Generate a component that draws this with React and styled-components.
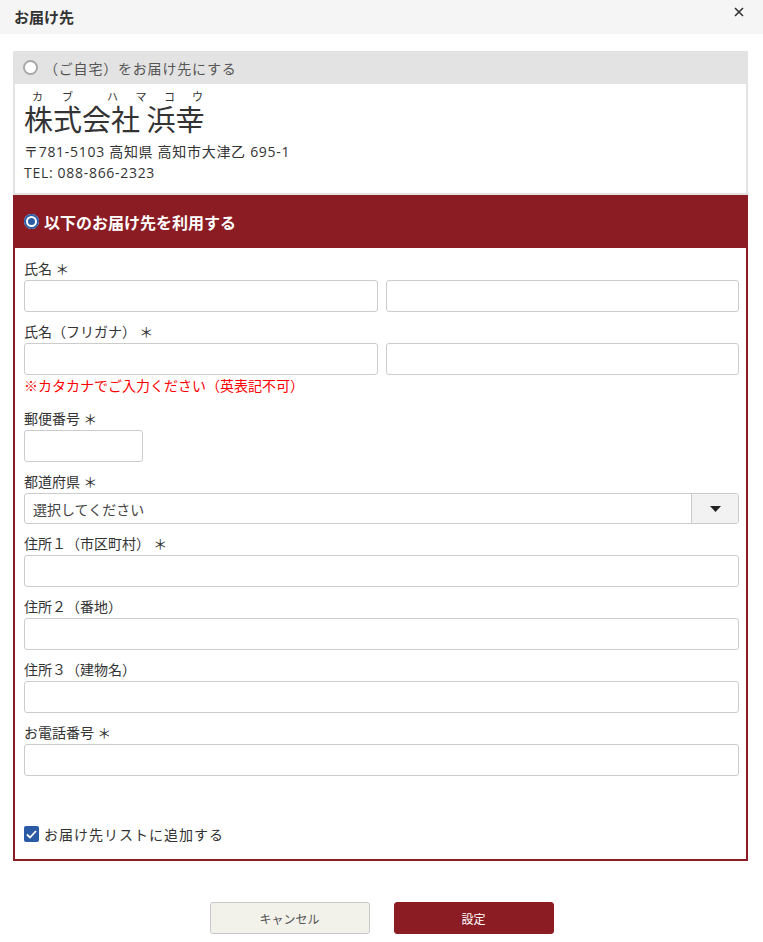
import styled, { createGlobalStyle } from 'styled-components'

const GlobalStyle = createGlobalStyle`
  * { box-sizing: border-box; }
  body {
    margin: 0;
    background: #FFF;
    font-family: "Noto Sans CJK JP", "Noto Sans", sans-serif;
    color: #333;
  }
`

function Radio({ checked }) {
  return <RadioMark $checked={checked} />
}

function App() {
  return (
    <Modal>
      <GlobalStyle />
      <Header>
        <h2>お届け先</h2>
        <CloseButton aria-label="閉じる">
          <svg width="10" height="10" viewBox="0 0 10 10">
            <path d="M1 1 L9 9 M9 1 L1 9" stroke="#333" strokeWidth="1.6" />
          </svg>
        </CloseButton>
      </Header>

      <Body>
        <HomeBox>
          <HomeHead>
            <Radio />
            <span>（ご自宅）をお届け先にする</span>
          </HomeHead>
          <Address>
            <Furigana>
              <span className="first">カブ</span>
              <span className="second">ハマコウ</span>
            </Furigana>
            <CompanyName>株式会社 浜幸</CompanyName>
            <p>〒781-5103 高知県 高知市大津乙 695-1</p>
            <p>TEL: 088-866-2323</p>
          </Address>
        </HomeBox>

        <OtherBox>
          <OtherHead>
            <Radio checked />
            <span>以下のお届け先を利用する</span>
          </OtherHead>
          <Form>
            <Field>
              <Label>氏名 ＊</Label>
              <TwoCols>
                <Input />
                <Input />
              </TwoCols>
            </Field>
            <Field $gap={0}>
              <Label>氏名（フリガナ） ＊</Label>
              <TwoCols>
                <Input />
                <Input />
              </TwoCols>
              <Note>※カタカナでご入力ください（英表記不可）</Note>
            </Field>
            <Field>
              <Label>郵便番号 ＊</Label>
              <Input $width="119px" />
            </Field>
            <Field>
              <Label>都道府県 ＊</Label>
              <Select>
                <span>選択してください</span>
                <SelectArrow>
                  <svg width="11" height="6" viewBox="0 0 11 6">
                    <path d="M0 0 H11 L5.5 6 Z" fill="#222" />
                  </svg>
                </SelectArrow>
              </Select>
            </Field>
            <Field>
              <Label>住所１（市区町村） ＊</Label>
              <Input />
            </Field>
            <Field>
              <Label>住所２（番地）</Label>
              <Input />
            </Field>
            <Field>
              <Label>住所３（建物名）</Label>
              <Input />
            </Field>
            <Field>
              <Label>お電話番号 ＊</Label>
              <Input />
            </Field>
            <CheckRow>
              <CheckBox>
                <svg width="11" height="9" viewBox="0 0 11 9">
                  <path d="M1 4.5 L4 7.5 L10 1" stroke="#FFF" strokeWidth="1.8" fill="none" />
                </svg>
              </CheckBox>
              <span>お届け先リストに追加する</span>
            </CheckRow>
          </Form>
        </OtherBox>

        <Buttons>
          <Button>キャンセル</Button>
          <Button $primary>設定</Button>
        </Buttons>
      </Body>
    </Modal>
  )
}

const Modal = styled.div`
  width: 763px;
  min-height: 942px;
  background: #FFF;
`

const Header = styled.div`
  height: 34px;
  display: flex;
  justify-content: space-between;
  align-items: center;
  padding: 0 19px 0 14px;
  background: #F5F5F5;

  h2 {
    margin: 0;
    font-size: 15px;
    font-weight: 700;
    color: #333;
    line-height: 20px;
  }
`

const CloseButton = styled.button`
  align-self: flex-start;
  margin-top: 7px;
  padding: 0;
  border: 0;
  background: none;
  display: flex;
  cursor: pointer;
`

const Body = styled.div`
  padding: 17px 15px 0 13px;
`

const HomeBox = styled.div`
  border: 2px solid #E3E3E3;
  border-top: 0;
`

const HomeHead = styled.div`
  height: 33px;
  margin: 0 -2px;
  padding: 0 10px;
  display: flex;
  align-items: center;
  gap: 6px;
  background: #E3E3E3;
  font-size: 14px;
  letter-spacing: 0.8px;
  color: #555;
`

const RadioMark = styled.span`
  width: 15px;
  height: 15px;
  border-radius: 50%;
  flex-shrink: 0;
  background: ${p => (p.$checked ? '#2C5BA5' : '#FFF')};
  border: ${p => (p.$checked ? '0' : '2px solid #A8A8A8')};
  box-shadow: ${p => (p.$checked ? 'inset 0 0 0 2px #2C5BA5, inset 0 0 0 4px #FFF' : 'none')};
`

const Address = styled.div`
  padding: 5px 9px 10px;
  color: #333;

  p {
    margin: 0;
    font-family: "Open Sans", "Noto Sans CJK JP", sans-serif;
    font-size: 14px;
    line-height: 21px;
    letter-spacing: 0.7px;
  }
`

const Furigana = styled.div`
  display: flex;
  padding-left: 8px;
  font-size: 11px;
  line-height: 14px;
  color: #333;

  .first {
    letter-spacing: 19px;
  }

  .second {
    margin-left: 15px;
    letter-spacing: 17.5px;
  }
`

const CompanyName = styled.div`
  margin: 0 0 8px;
  font-size: 29px;
  line-height: 30px;
  color: #333;
`

const OtherBox = styled.div`
  border: 2px solid #8B1C24;
  border-top: 0;
`

const OtherHead = styled.div`
  height: 53px;
  margin: 0 -2px;
  padding: 0 11px;
  display: flex;
  align-items: center;
  gap: 5px;
  background: #8B1C24;
  color: #FFF;
  font-size: 16px;
  font-weight: 700;
`

const Form = styled.div`
  padding: 10px 7px 15px 9px;
`

const Field = styled.div`
  margin-bottom: ${p => (p.$gap ?? 9)}px;
`

const Label = styled.div`
  font-size: 14px;
  line-height: 20px;
  margin-bottom: 2px;
  color: #333;
`

const TwoCols = styled.div`
  display: grid;
  grid-template-columns: 1fr 1fr;
  gap: 8px;
`

const Input = styled.input`
  display: block;
  width: ${p => p.$width || '100%'};
  height: 32px;
  border: 1px solid #CCC;
  border-radius: 3px;
  background: #FFF;
  font: inherit;
  font-size: 14px;
  padding: 0 8px;
  outline: none;
`

const Note = styled.div`
  font-size: 14px;
  line-height: 20px;
  color: #F00;
  margin-bottom: 13px;
`

const Select = styled.div`
  height: 31px;
  display: flex;
  align-items: center;
  justify-content: space-between;
  border: 1px solid #CCC;
  border-radius: 3px;
  overflow: hidden;
  font-size: 14px;
  color: #444;

  span {
    padding-left: 8px;
  }
`

const SelectArrow = styled.div`
  width: 47px;
  height: 100%;
  display: flex;
  align-items: center;
  justify-content: center;
  background: #F2F2F2;
  border-left: 1px solid #CCC;
`

const CheckRow = styled.label`
  margin-top: 48px;
  display: flex;
  align-items: center;
  gap: 5px;
  height: 20px;
  font-size: 14px;
  letter-spacing: 1px;
  color: #333;
`

const CheckBox = styled.span`
  width: 15px;
  height: 16px;
  border-radius: 2px;
  background: #2C5BA5;
  display: flex;
  align-items: center;
  justify-content: center;
`

const Buttons = styled.div`
  display: flex;
  justify-content: center;
  gap: 24px;
  margin-top: 41px;
  padding-left: 2px;
`

const Button = styled.button`
  width: 160px;
  height: 32px;
  border-radius: 3px;
  border: 1px solid ${p => (p.$primary ? '#8B1C24' : '#C8C8C8')};
  background: ${p => (p.$primary ? '#8B1C24' : '#F2F1EA')};
  color: ${p => (p.$primary ? '#FFF' : '#555')};
  font-family: inherit;
  font-size: 12px;
  cursor: pointer;
`

export default App
